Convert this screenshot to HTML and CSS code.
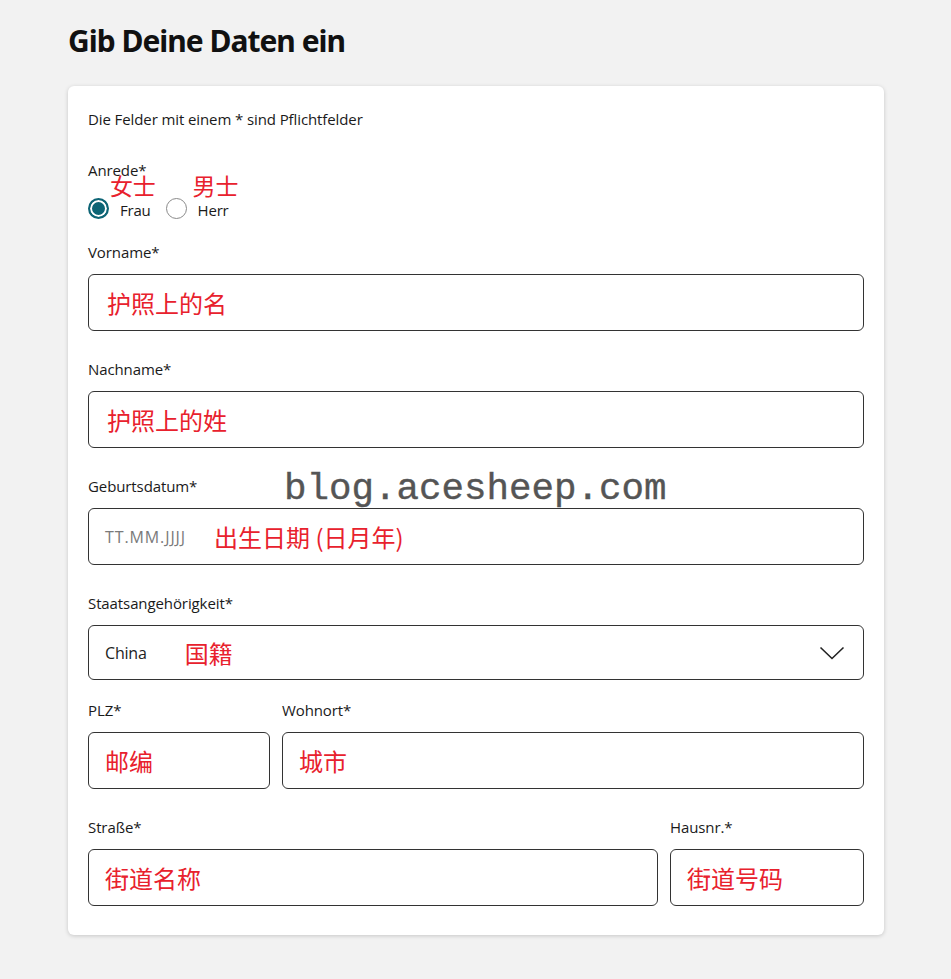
FILE: index.html
```html
<!DOCTYPE html>
<html lang="de">
<head>
<meta charset="utf-8">
<title>Gib Deine Daten ein</title>
<link rel="stylesheet" href="styles.css">
</head>
<body>
<main class="page">
  <h1 class="title">Gib Deine Daten ein</h1>
  <section class="card">
    <p class="hint">Die Felder mit einem * sind Pflichtfelder</p>

    <div class="field field-radio">
      <div class="label">Anrede*</div>
      <div class="radios">
        <label class="radio">
          <span class="dot checked"></span>
          <span class="radio-text">Frau</span>
          <span class="note note-radio note-frau">女士</span>
        </label>
        <label class="radio">
          <span class="dot"></span>
          <span class="radio-text">Herr</span>
          <span class="note note-radio note-herr">男士</span>
        </label>
      </div>
    </div>

    <div class="field">
      <div class="label">Vorname*</div>
      <div class="input"><span class="note">护照上的名</span></div>
    </div>

    <div class="field">
      <div class="label">Nachname*</div>
      <div class="input"><span class="note">护照上的姓</span></div>
    </div>

    <div class="field field-date">
      <div class="label">Geburtsdatum*</div>
      <div class="input"><span class="placeholder">TT.MM.JJJJ</span><span class="note">出生日期 (日月年)</span></div>
      <div class="watermark">blog.acesheep.com</div>
    </div>

    <div class="field field-select">
      <div class="label">Staatsangehörigkeit*</div>
      <div class="input select">
        <span class="value">China</span><span class="note">国籍</span>
        <svg class="chevron" width="26" height="16" viewBox="0 0 26 16" aria-hidden="true"><path d="M1.5 2.5 L13 13.5 L24.5 2.5" fill="none" stroke="#222" stroke-width="1.6"/></svg>
      </div>
    </div>

    <div class="row row-plz">
      <div class="field">
        <div class="label">PLZ*</div>
        <div class="input"><span class="note">邮编</span></div>
      </div>
      <div class="field">
        <div class="label">Wohnort*</div>
        <div class="input"><span class="note">城市</span></div>
      </div>
    </div>

    <div class="row row-street">
      <div class="field">
        <div class="label">Straße*</div>
        <div class="input"><span class="note">街道名称</span></div>
      </div>
      <div class="field">
        <div class="label">Hausnr.*</div>
        <div class="input"><span class="note">街道号码</span></div>
      </div>
    </div>
  </section>
</main>
</body>
</html>
```

FILE: styles.css
```css
* { box-sizing: border-box; }

body {
  margin: 0;
  background: #f2f2f2;
  font-family: "Open Sans", "Noto Sans", sans-serif;
  color: #1a1a1a;
}

.page {
  width: 816px;
  margin-left: 68px;
  padding-top: 20px;
  padding-bottom: 44px;
}

.title {
  margin: 0;
  font-family: "Noto Sans", "Open Sans", sans-serif;
  font-size: 30px;
  font-weight: 700;
  line-height: 42px;
  letter-spacing: -1px;
  color: #111;
}

.card {
  margin-top: 24px;
  background: #fff;
  border-radius: 6px;
  box-shadow: 0 1px 4px rgba(0,0,0,0.18);
  padding: 20px 20px 29px;
  display: flex;
  flex-direction: column;
}

.hint {
  margin: 0;
  font-size: 15px;
  line-height: 26px;
  letter-spacing: -0.1px;
}

.label {
  font-size: 15px;
  line-height: 20px;
  letter-spacing: -0.1px;
  margin-bottom: 12px;
  white-space: nowrap;
}

.field { position: relative; display: flex; flex-direction: column; }

.card > .field, .card > .row { margin-top: 28px; }
.card > .field-select + .row { margin-top: 20px; }

.field-radio .label { margin-bottom: 0; }
.card > .field-radio + .field { margin-top: 24px; }

.radios { display: flex; gap: 15px; margin-top: 18px; }

.radio {
  position: relative;
  display: flex;
  align-items: center;
  gap: 11px;
  height: 20px;
  font-size: 15px;
  letter-spacing: -0.2px;
}

.dot {
  width: 21px;
  height: 21px;
  border-radius: 50%;
  border: 1px solid #8a8a8a;
  background: #fff;
  flex: none;
}

.dot.checked {
  border: 2px solid #0d6475;
  background: #0d6475;
  box-shadow: inset 0 0 0 2px #fff;
}

.radio-text { padding-top: 3px; }

.note {
  color: #e8212d;
  font-family: "Noto Sans CJK SC", "Noto Sans", sans-serif;
  font-size: 24px;
  line-height: 1;
  white-space: nowrap;
}

.note-radio {
  position: absolute;
  top: -24px;
  font-size: 23px;
}
.note-frau { left: 22px; }
.note-herr { left: 27px; }

.input {
  height: 57px;
  border: 1px solid #333;
  border-radius: 6px;
  display: flex;
  align-items: center;
  padding: 0 18px;
  gap: 28px;
}

.select { height: 55px; padding: 0 18px 0 16px; gap: 38px; }

.placeholder {
  color: #7a7a7a;
  font-size: 16px;
  letter-spacing: 0.9px;
}

.field-date .input { padding-left: 16px; }

.value {
  font-size: 16px;
  letter-spacing: -0.2px;
  color: #222;
}

.chevron { margin-left: auto; }

.watermark {
  position: absolute;
  left: 196px;
  top: -7px;
  font-family: "Liberation Mono", "DejaVu Sans Mono", monospace;
  font-size: 37.5px;
  line-height: 40px;
  color: #555;
  -webkit-text-stroke: 0.4px #555;
  white-space: nowrap;
}

.row { display: flex; gap: 12px; }
.row-plz > .field:first-child { width: 182px; }
.row-plz > .field:last-child { flex: 1; }
.row-street > .field:first-child { flex: 1; }
.row-street > .field:last-child { width: 194px; }
.row .input { padding-left: 16px; }
```
